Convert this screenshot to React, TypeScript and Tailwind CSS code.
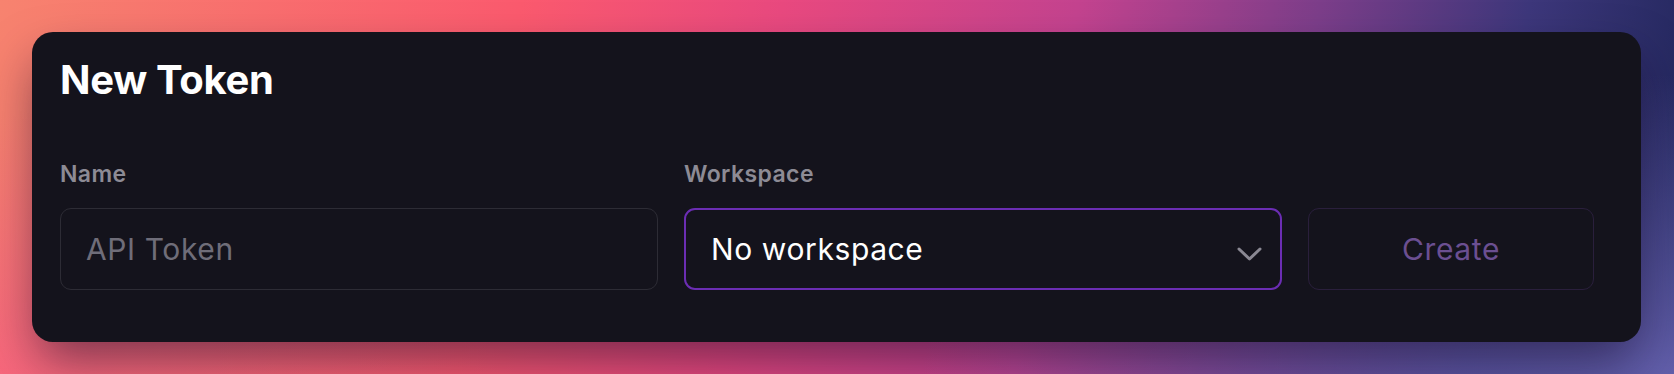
import React from 'react';

const fieldBase =
  'h-[82px] w-full rounded-[11px] bg-[#14131c] text-[30px] leading-none tracking-[0.6px] flex items-center';

const Label = ({ children }: { children?: React.ReactNode }) => (
  <div className="h-[28px] text-[23px] leading-[28px] font-semibold tracking-[0.4px] text-[#8d8b95]">
    {children}
  </div>
);

const App = () => {
  return (
    <div
      className="relative w-full h-[374px] overflow-hidden pt-[32px] pl-[32px]"
      style={{ fontFamily: 'Inter, "Noto Sans", sans-serif' }}
    >
      {/* background */}
      <div className="absolute inset-0 bg-[linear-gradient(100deg,#f7836f_0%,#fb5a6e_30%,#e9497f_45%,#c4438f_62%,#7c3e8a_76%,#3d377b_88%,#1f2559_100%)]" />
      <div className="absolute inset-0 bg-[radial-gradient(ellipse_45%_80%_at_100%_100%,rgba(110,105,185,0.85),transparent)]" />
      <div className="absolute inset-0 bg-[radial-gradient(ellipse_30%_70%_at_0%_100%,rgba(248,94,130,0.7),transparent)]" />

      <div className="relative w-[1609px] h-[310px] rounded-[21px] bg-[#14131c] pl-[28px] pr-[47px] pt-[24px] shadow-[0_24px_50px_-6px_rgba(20,10,40,0.55)]">
        <h1 className="text-[40px] leading-[48px] font-bold text-white tracking-[-0.3px]">New Token</h1>

        <div className="mt-[56px] flex gap-[26px]">
          <div className="w-[598px] flex flex-col gap-[20px]">
            <Label>Name</Label>
            <div className={`${fieldBase} border-[1.5px] border-[#2d2c35] pl-[25px] text-[#6f6d79]`}>
              API Token
            </div>
          </div>

          <div className="w-[598px] flex flex-col gap-[20px]">
            <Label>Workspace</Label>
            <div
              className={`${fieldBase} border-2 border-[#6b2db3] pl-[25px] pr-[18px] justify-between text-white`}
            >
              <span>No workspace</span>
              <svg width="25" height="15" viewBox="0 0 25 15" className="mt-[10px]" fill="none">
                <path
                  d="M2 2 L12.5 12 L23 2"
                  stroke="#8a8893"
                  strokeWidth="3"
                  strokeLinecap="round"
                  strokeLinejoin="round"
                />
              </svg>
            </div>
          </div>

          <div className="w-[286px] flex flex-col gap-[20px]">
            <Label />
            <button
              className={`${fieldBase} border-[1.5px] border-[#2a1f3c] justify-center text-[#6b4f91]`}
            >
              Create
            </button>
          </div>
        </div>
      </div>
    </div>
  );
};

export default App;
